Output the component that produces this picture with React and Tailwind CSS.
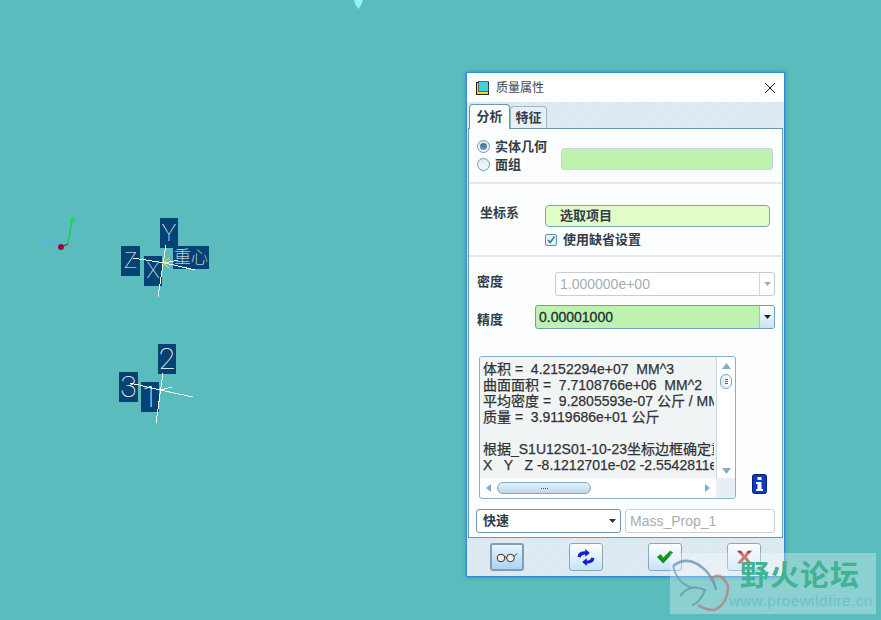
const FONT = { fontFamily: '"Liberation Sans","Noto Sans CJK SC",sans-serif' };

function Gizmo() {
  return (
    <svg className="absolute left-0 top-0" width="881" height="620" viewBox="0 0 881 620">
      <path d="M354 0 L363 0 Q361 6 358.500 9 Q355.500 6 354 0Z" fill="#8ff5f7" />
      <line x1="68" y1="243" x2="72" y2="221" stroke="#10d050" strokeWidth="1.400" />
      <circle cx="72.500" cy="220" r="2.500" fill="#10e050" />
      <line x1="45" y1="240" x2="66" y2="244" stroke="#58b4e8" strokeWidth="1.200" />
      <circle cx="45" cy="240" r="2.200" fill="#58b4e8" />
      <line x1="61" y1="247" x2="68" y2="244" stroke="#a01040" strokeWidth="1.200" />
      <circle cx="61" cy="247" r="3" fill="#98083c" />
      <g stroke="#fff" strokeWidth="1" fill="none" shapeRendering="crispEdges">
        <path d="M166 245 L158 297" />
        <path d="M133 258 L165 263 L195 270" />
        <path d="M165 263 L178 260" />
        <path d="M163 373 L156 423" />
        <path d="M130 383 L160 390 L193 397" />
        <path d="M160 390 L172 387" />
      </g>
      <g stroke="#f8e840" strokeWidth="1" fill="none">
        <path d="M163 263 L169 258 M163 263 L169 268 M162 263 L168 263" />
      </g>
    </svg>
  );
}

function Tag({ className, children }) {
  return (
    <div className={`absolute flex items-center justify-center whitespace-nowrap bg-[#034373] font-thin leading-none text-white ${className}`} style={{ fontFamily: 'Roboto,"Noto Sans CJK SC",sans-serif' }}>
      {children}
    </div>
  );
}

function SmallArrow({ color = "#333" }) {
  return (
    <svg width="7" height="4" viewBox="0 0 7 4"><path d="M0 0H7L3.500 4Z" fill={color} /></svg>
  );
}

function Radio({ on }) {
  return (
    <span className="flex size-[13px] items-center justify-center rounded-full border border-[#6d9cb6] bg-gradient-to-b from-[#dfe9f1] to-[#f5f9fc]">
      {on && <span className="size-[7px] rounded-full bg-gradient-to-b from-[#3c6f8d] to-[#6d9db9]" />}
    </span>
  );
}

function ToolBtn({ active, children }) {
  return (
    <button className={`flex h-[28px] w-[34px] items-center justify-center rounded-[3px] bg-gradient-to-b ${active ? "border-2 border-[#7f9fb2] from-[#e8f3fb] to-[#a9d4f5]" : "border border-[#88a9bc] from-white to-[#c5e3f9]"}`}>
      {children}
    </button>
  );
}

export default function App() {
  return (
    <div className="relative h-[620px] w-[881px] overflow-hidden bg-[#5bbcbd]" style={FONT}>
      <Tag className="left-[160px] top-[218px] h-[30px] w-[18px] text-[24px]">Y</Tag>
      <Tag className="left-[121px] top-[246px] h-[30px] w-[19px] text-[22px]">Z</Tag>
      <Tag className="left-[144px] top-[256px] h-[30px] w-[18px] text-[22px]">X</Tag>
      <Tag className="left-[173px] top-[246px] h-[23px] w-[36px] text-[17px]">重心</Tag>
      <Tag className="left-[158px] top-[344px] h-[30px] w-[18px] text-[30px]">2</Tag>
      <Tag className="left-[119px] top-[372px] h-[30px] w-[19px] text-[30px]">3</Tag>
      <Tag className="left-[141px] top-[382px] h-[30px] w-[18px] text-[30px]">1</Tag>
      <Gizmo />

      {/* Dialog */}
      <div className="absolute left-[466px] top-[72px] flex h-[505px] w-[319px] flex-col border border-[#2a8fd8] bg-[#dce8f0] text-[13px] font-bold leading-[16px] text-[#333d45] shadow-[0_0_4px_rgba(0,40,60,0.35)]">
        <div className="flex h-[29px] items-center bg-white pl-[9px] pr-[8px]">
          <svg width="14" height="14" viewBox="0 0 14 14">
            <rect x="0.500" y="1.500" width="12" height="12" fill="#f5e020" stroke="#222" />
            <rect x="2.500" y="0.500" width="10" height="10" fill="#45d0e0" stroke="#222" strokeWidth="0.600" />
          </svg>
          <span className="ml-[6px] text-[12px] font-normal text-[#444]">质量属性</span>
          <svg className="ml-auto" width="12" height="12" viewBox="0 0 12 12"><path d="M1 1L11 11M11 1L1 11" stroke="#111" strokeWidth="1" /></svg>
        </div>

        <div className="flex h-[26px] items-end bg-[repeating-linear-gradient(135deg,#dce8f0_0,#dce8f0_2px,#e1ecf3_2px,#e1ecf3_3px)] pl-[2px]">
          <div className="z-10 -mb-px flex h-[25px] w-[41px] items-center justify-center rounded-t-[4px] border border-b-0 border-[#6d97b0] bg-[#fbfdfe]">分析</div>
          <div className="flex h-[22px] w-[37px] items-center justify-center rounded-t-[4px] border border-b-0 border-[#9ab8cb] bg-[#e6eff5]">特征</div>
        </div>

        <div className="mx-[1px] flex h-[410px] flex-col border border-[#6d97b0] bg-[#fbfdfe]">
          {/* section 1 */}
          <div className="flex h-[55px] items-center border-b-2 border-[#e6e9ec] pl-[8px] pr-[9px]">
            <div className="flex flex-col">
              <div className="flex h-[18px] items-center gap-[5px]"><Radio on /><span>实体几何</span></div>
              <div className="flex h-[18px] items-center gap-[5px]"><Radio /><span>面组</span></div>
            </div>
            <div className="ml-auto mt-[7px] h-[22px] w-[212px] rounded-[3px] border border-[#cdd5da] bg-[#bff2ae]" />
          </div>

          {/* section 2 */}
          <div className="flex h-[73px] border-b-2 border-[#e6e9ec] pl-[11px]">
            <span className="mt-[21px] w-[65px]">坐标系</span>
            <div className="mt-[21px] flex flex-col">
              <div className="flex h-[22px] w-[225px] items-center rounded-[4px] border border-[#7fa3b8] bg-[#e2fdc7] pl-[14px]">选取项目</div>
              <div className="mt-[6px] flex h-[13px] items-center gap-[6px]">
                <span className="flex size-[12px] items-center justify-center rounded-[2px] border border-[#5d90ad] bg-[#e6f0f7]">
                  <svg width="10" height="10" viewBox="0 0 10 10"><path d="M2 5L4.200 7.500L8.500 1.500" stroke="#3c7596" strokeWidth="1.500" fill="none" /></svg>
                </span>
                <span>使用缺省设置</span>
              </div>
            </div>
          </div>

          {/* section 3 */}
          <div className="flex flex-col pl-[8px] pr-[7px] pt-[15px]">
            <div className="flex h-[24px] items-center">
              <span className="-mt-[4px]">密度</span>
              <div className="ml-auto flex h-[24px] w-[220px] rounded-[3px] border border-[#c9cdd0] bg-white">
                <span className="flex-1 self-center pl-[4px] text-[14px] font-normal leading-none text-[#a9adb0]">1.000000e+00</span>
                <span className="flex w-[15px] items-center justify-center border-l border-[#d4d7d9]"><SmallArrow color="#aaa" /></span>
              </div>
            </div>
            <div className="mt-[9px] flex h-[24px] items-center">
              <span className="mt-[6px]">精度</span>
              <div className="ml-auto flex h-[24px] w-[240px] rounded-[3px] border border-[#6f9cb8] bg-[#bff2ae]">
                <span className="flex-1 self-center pl-[3px] text-[14px] font-normal leading-none text-[#263036] [-webkit-text-stroke:0.3px_#263036]">0.00001000</span>
                <span className="flex w-[15px] items-center justify-center rounded-r-[2px] border-l border-[#a9c0cf] bg-gradient-to-b from-white to-[#c7e3f7]"><SmallArrow color="#222" /></span>
              </div>
            </div>
          </div>

          {/* info text */}
          <div className="mt-[27px] flex items-end pl-[10px]">
            <div className="flex h-[143px] w-[257px] flex-col overflow-hidden rounded-[3px] border border-[#88b0c6] bg-white">
              <div className="flex h-[122px]">
                <div className="w-[236px] bg-[#f1f4f5] pl-[3px] pr-[2px] pt-[4px]">
                  <pre className="h-full overflow-hidden whitespace-pre text-[14px] font-normal leading-[16px] text-[#333] [-webkit-text-stroke:0.25px_#333]" style={FONT}>
{`体积 =  4.2152294e+07  MM^3
曲面面积 =  7.7108766e+06  MM^2
平均密度 =  9.2805593e-07 公斤 / MM^3
质量 =  3.9119686e+01 公斤

根据_S1U12S01-10-23坐标边框确定重心
X   Y   Z -8.1212701e-02 -2.5542811e+00`}
                  </pre>
                </div>
                <div className="flex w-[19px] flex-col items-center border-l border-[#c7d9e4] pt-[6px]">
                  <svg width="9" height="6" viewBox="0 0 9 6"><path d="M4.500 0L9 6H0Z" fill="#80aec8" /></svg>
                  <div className="mt-[5px] flex h-[15px] w-[12px] flex-col items-center justify-center gap-px rounded-full border border-[#7fa7bf] bg-gradient-to-r from-[#dcebf5] to-white">
                    <i className="h-px w-[3px] bg-[#567]" /><i className="h-px w-[3px] bg-[#567]" /><i className="h-px w-[3px] bg-[#567]" />
                  </div>
                  <svg className="mb-[4px] mt-auto" width="9" height="6" viewBox="0 0 9 6"><path d="M4.500 6L9 0H0Z" fill="#80aec8" /></svg>
                </div>
              </div>
              <div className="flex h-[20px] items-center">
                <div className="flex w-[236px] items-center px-[6px]">
                  <svg width="5" height="8" viewBox="0 0 5 8"><path d="M0 4L5 0V8Z" fill="#80aec8" /></svg>
                  <div className="ml-[6px] flex h-[12px] w-[94px] items-center justify-center gap-px rounded-full border border-[#7fa7bf] bg-gradient-to-b from-[#e9f3f9] to-[#bcd7e8]">
                    <i className="size-px bg-[#456]" /><i className="size-px bg-[#456]" /><i className="size-px bg-[#456]" /><i className="size-px bg-[#456]" />
                  </div>
                  <svg className="ml-auto" width="5" height="8" viewBox="0 0 5 8"><path d="M5 4L0 0V8Z" fill="#80aec8" /></svg>
                </div>
                <div className="h-full flex-1 bg-[#e7eef4]" />
              </div>
            </div>
            <svg className="mb-[5px] ml-[16px]" width="15" height="20" viewBox="0 0 15 20">
              <rect x="0.500" y="0.500" width="14" height="19" rx="2" fill="#1038c8" stroke="#0a1f70" />
              <rect x="5.500" y="3" width="4" height="3" fill="#fff" />
              <path d="M4 8H9.500V15H11V17H4V15H5.500V10H4Z" fill="#fff" />
            </svg>
          </div>

          {/* bottom row */}
          <div className="mt-[10px] flex gap-[4px] pl-[7px]">
            <div className="flex h-[24px] w-[145px] items-center justify-between rounded-[3px] border border-[#6f97ad] bg-white pl-[6px] pr-[4px]">
              <span>快速</span><SmallArrow color="#333" />
            </div>
            <div className="flex h-[24px] w-[150px] items-center rounded-[3px] border border-[#cdd1d4] bg-white pl-[4px] text-[14px] font-normal text-[#a9adb0]">Mass_Prop_1</div>
          </div>
        </div>

        {/* buttons */}
        <div className="flex flex-1 items-center gap-[45px] bg-[repeating-linear-gradient(135deg,#dce8f0_0,#dce8f0_2px,#e1ecf3_2px,#e1ecf3_3px)] pl-[23px]">
          <ToolBtn active>
            <svg width="22" height="12" viewBox="0 0 22 12" fill="#f5f0e0" stroke="#333" strokeWidth="1"><circle cx="5" cy="7" r="3.800" /><circle cx="14.500" cy="7" r="3.800" /><path d="M8.800 6.500Q9.700 5 10.700 6.500M18 5.500L21 2.500" fill="none" /></svg>
          </ToolBtn>
          <ToolBtn>
            <svg width="20" height="17" viewBox="0 0 26 22" fill="#1020d0">
              <path d="M2 10Q3 3 12 3V0L18 5L12 10V7Q7 7 6 11Z" />
              <path d="M24 12Q23 19 14 19V22L8 17L14 12V15Q19 15 20 11Z" />
            </svg>
          </ToolBtn>
          <ToolBtn>
            <svg width="18" height="14" viewBox="0 0 20 16"><path d="M1 8L5 5L8 9L16 1L19 3L8 15Z" fill="#0b9a18" stroke="#066a10" strokeWidth="0.500" /></svg>
          </ToolBtn>
          <ToolBtn>
            <svg width="17" height="14" viewBox="0 0 18 16"><path d="M1 1H5L9 6L13 1H17L11 8L17 15H13L9 10L5 15H1L7 8Z" fill="#c83830" stroke="#7a2a26" strokeWidth="0.500" /></svg>
          </ToolBtn>
        </div>
      </div>

      {/* Watermark */}
      <div className="absolute left-[670px] top-[553px] h-[61px] w-[206px] bg-white/30">
        <svg className="absolute left-0 top-0" width="60" height="62" viewBox="0 0 60 62" fill="none" opacity="0.700">
          <path d="M3 13Q20 0 38 20Q45 30 46 37" stroke="#5f8ea3" strokeWidth="2.500" />
          <path d="M3 13Q8 33 25 35" stroke="#5f8ea3" strokeWidth="1.500" />
          <path d="M40 27Q50 16 58 33Q58 50 45 57Q35 57 28 52" stroke="#b87878" strokeWidth="2.500" />
          <path d="M10 43Q20 30 35 37Q30 50 22 52" stroke="#5f8ea3" strokeWidth="2" />
        </svg>
        <div className="absolute left-[70px] top-[5px] text-[29px] font-bold leading-[36px] tracking-[1px] text-[#3fb392]">野火论坛</div>
        <div className="absolute left-[59px] top-[39px] text-[15px] leading-[18px] tracking-[0.600px] text-[#67c4c6]">www.proewildfire.cn</div>
      </div>
    </div>
  );
}
